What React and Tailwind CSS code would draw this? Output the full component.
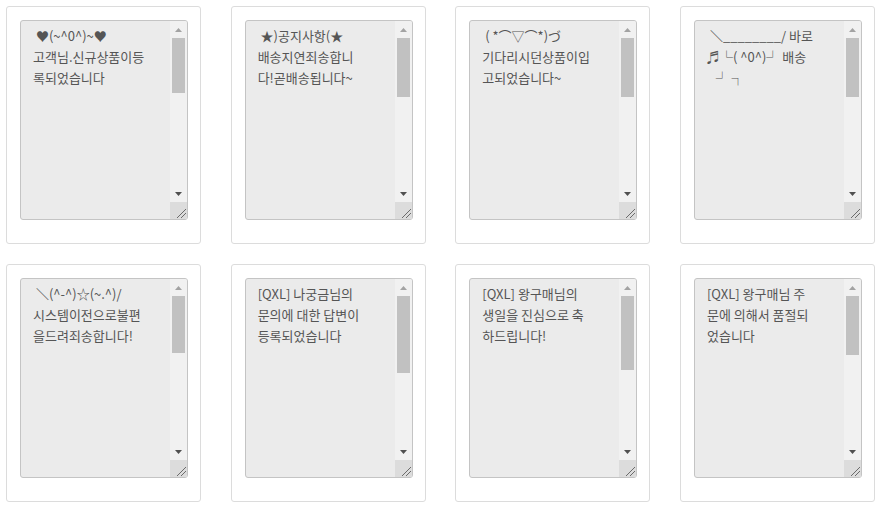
import React from "react";

const items = [
  { text: " ♥(~^0^)~♥\n고객님.신규상품이등\n록되었습니다", thumb: "h-[55px]" },
  { text: " ★)공지사항(★\n배송지연죄송합니\n다!곧배송됩니다~", thumb: "h-[59px]" },
  { text: " ( *⌒▽⌒*)づ\n기다리시던상품이입\n고되었습니다~", thumb: "h-[59px]" },
  { text: " ＼________/ 바로\n♬└( ^0^)┘ 배송\n   ┘ ┐", thumb: "h-[59px]" },
  { text: " ＼(^-^)☆(~.^)/\n시스템이전으로불편\n을드려죄송합니다!", thumb: "h-[57px]" },
  { text: "[QXL] 나궁금님의\n문의에 대한 답변이\n등록되었습니다", thumb: "h-[77px]" },
  { text: "[QXL] 왕구매님의\n생일을 진심으로 축\n하드립니다!", thumb: "h-[74px]" },
  { text: "[QXL] 왕구매님 주\n문에 의해서 품절되\n었습니다", thumb: "h-[59px]" },
];

function Scrollbar({ thumb }) {
  return (
    <div className="flex w-[17px] shrink-0 flex-col bg-[#f1f1f1]">
      <div className="flex h-[17px] items-center justify-center">
        <svg width="7" height="4" viewBox="0 0 7 4">
          <polygon points="0,4 7,4 3.5,0" fill="#a3a3a3" />
        </svg>
      </div>
      <div className="flex flex-1 flex-col px-[2px]">
        <div className={`${thumb} w-full bg-[#c1c1c1]`} />
      </div>
      <div className="flex h-[17px] items-center justify-center">
        <svg width="7" height="4" viewBox="0 0 7 4">
          <polygon points="0,0 7,0 3.5,4" fill="#505050" />
        </svg>
      </div>
      <div className="h-[17px] bg-[#dcdcdc]">
        <svg width="17" height="17" viewBox="0 0 17 17">
          <line x1="7" y1="16" x2="16" y2="7" stroke="#6b6b6b" strokeWidth="1" />
          <line x1="11" y1="16" x2="16" y2="11" stroke="#6b6b6b" strokeWidth="1" />
        </svg>
      </div>
    </div>
  );
}

function Card({ text, thumb }) {
  return (
    <div className="h-[238px] w-[195px] rounded-[3px] border border-[#dcdcdc] bg-white pl-[13px] pt-[13px]">
      <div className="flex h-[200px] w-[168px] overflow-hidden rounded-[3px] border border-[#c4c4c4] bg-[#ebebeb]">
        <div className="flex-1 overflow-hidden whitespace-pre px-[12px] pt-[4px] text-[13px] leading-[21px] text-[#555555]">
          {text}
        </div>
        <Scrollbar thumb={thumb} />
      </div>
    </div>
  );
}

export default function App() {
  return (
    <div
      className="min-h-[509px] w-[879px] bg-white pl-[6px] pt-[6px]"
      style={{ fontFamily: '"Noto Sans CJK KR", "Noto Sans", sans-serif' }}
    >
      <div className="grid grid-cols-[repeat(4,195px)] gap-x-[29.67px] gap-y-[20px]">
        {items.map((it, i) => (
          <Card key={i} text={it.text} thumb={it.thumb} />
        ))}
      </div>
    </div>
  );
}
